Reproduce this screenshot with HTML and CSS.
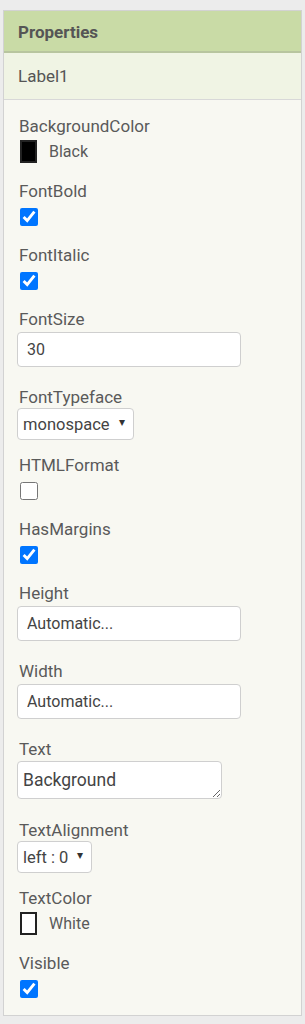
FILE: index.html
```html
<!DOCTYPE html>
<html lang="en">

<head>
    <meta charset="UTF-8">
    <meta name="viewport" content="width=device-width, initial-scale=1.0">
    <link rel="stylesheet" href="styles.css">
    <title>Properties</title>
</head>

<body>
    <div class="panel">
        <div class="panelHead">Properties</div>
        <div class="panelSub">Label1</div>
        <div class="props">
            <div class="prop propColor">
                <div class="propName">BackgroundColor</div>
                <div class="colorPick">
                    <span class="swatch swatchBlack"></span>
                    <span class="colorName">Black</span>
                </div>
            </div>
            <div class="prop">
                <div class="propName">FontBold</div>
                <input type="checkbox" class="propCheck" checked>
            </div>
            <div class="prop">
                <div class="propName">FontItalic</div>
                <input type="checkbox" class="propCheck" checked>
            </div>
            <div class="prop propBox">
                <div class="propName">FontSize</div>
                <input type="text" class="propText" value="30">
            </div>
            <div class="prop propSel">
                <div class="propName">FontTypeface</div>
                <span class="selWrap">
                    <select class="propSelect selWide">
                        <option>monospace</option>
                    </select>
                </span>
            </div>
            <div class="prop">
                <div class="propName">HTMLFormat</div>
                <input type="checkbox" class="propCheck">
            </div>
            <div class="prop">
                <div class="propName">HasMargins</div>
                <input type="checkbox" class="propCheck" checked>
            </div>
            <div class="prop propBox">
                <div class="propName">Height</div>
                <input type="text" class="propText" value="Automatic...">
            </div>
            <div class="prop propBox">
                <div class="propName">Width</div>
                <input type="text" class="propText" value="Automatic...">
            </div>
            <div class="prop propArea">
                <div class="propName">Text</div>
                <textarea class="propTextArea" rows="1">Background</textarea>
            </div>
            <div class="prop propSel">
                <div class="propName">TextAlignment</div>
                <span class="selWrap">
                    <select class="propSelect selNarrow">
                        <option>left : 0</option>
                    </select>
                </span>
            </div>
            <div class="prop propColor">
                <div class="propName">TextColor</div>
                <div class="colorPick">
                    <span class="swatch swatchWhite"></span>
                    <span class="colorName">White</span>
                </div>
            </div>
            <div class="prop">
                <div class="propName">Visible</div>
                <input type="checkbox" class="propCheck" checked>
            </div>
        </div>
    </div>
</body>

</html>
```

FILE: styles.css
```css
body {
    margin: 0;
    background-color: #ececec;
    font-family: Roboto, "Liberation Sans", sans-serif;
    color: #5a5a5a;
}

.panel {
    margin: 10px 3px 8px 3px;
    border: 1px solid #d2d2d2;
    background: #f8f8f2;
}

.panelHead {
    height: 40px;
    line-height: 42px;
    padding-left: 14px;
    background: #c9dba6;
    border-bottom: 2px solid #b8c59f;
    font-size: 17px;
    font-weight: bold;
    color: #555;
}

.panelSub {
    height: 46px;
    line-height: 46px;
    padding-left: 14px;
    background: #f0f4e4;
    border-bottom: 1px solid #d8d8d8;
    font-size: 17px;
    color: #555;
}

.props {
    padding: 16px 0 17px 13px;
}

.prop {
    margin-bottom: 19px;
}

.prop.propColor {
    margin-bottom: 18px;
}

.prop.propBox {
    margin-bottom: 20px;
}

.prop.propArea {
    margin-bottom: 21px;
}

.prop.propSel {
    margin-bottom: 15px;
}

.prop:last-child {
    margin-bottom: 0;
}

.propName {
    padding-left: 2px;
    font-size: 17px;
    line-height: 20px;
}

.propCheck {
    display: block;
    width: 18px;
    height: 18px;
    margin: 7px 0 0 3px;
}

.colorPick {
    display: flex;
    align-items: center;
    margin: 4px 0 0 3px;
    height: 23px;
}

.swatch {
    width: 13px;
    height: 19px;
    border: 2px solid #222;
}

.swatchBlack {
    background: #000;
}

.swatchWhite {
    background: #fff;
}

.colorName {
    margin-left: 12px;
    font-size: 16px;
}

.propText {
    display: block;
    box-sizing: border-box;
    width: 224px;
    height: 35px;
    margin-top: 3px;
    padding: 0 9px;
    border: 1px solid #cfcfcf;
    border-radius: 4px;
    background: #fff;
    font-family: inherit;
    font-size: 16px;
    color: #444;
}

.propTextArea {
    display: block;
    box-sizing: border-box;
    width: 205px;
    height: 38px;
    margin-top: 2px;
    padding: 7px 5px;
    border: 1px solid #cfcfcf;
    border-radius: 4px;
    background: #fff;
    font-family: inherit;
    font-size: 17.5px;
    line-height: 22px;
    color: #444;
    resize: both;
}

.selWrap {
    position: relative;
    display: inline-block;
    margin-top: 1px;
}

.selWrap::after {
    content: "\25BE";
    position: absolute;
    right: 9px;
    top: 7px;
    font-size: 12px;
    color: #333;
    pointer-events: none;
}

.propSelect {
    display: block;
    box-sizing: border-box;
    height: 32px;
    padding: 0 0 0 5px;
    border: 1px solid #cfcfcf;
    border-radius: 4px;
    background: #fff;
    font-family: inherit;
    font-size: 16.5px;
    color: #444;
    appearance: none;
    -webkit-appearance: none;
}

.selWide {
    width: 117px;
}

.selNarrow {
    width: 75px;
}
```
